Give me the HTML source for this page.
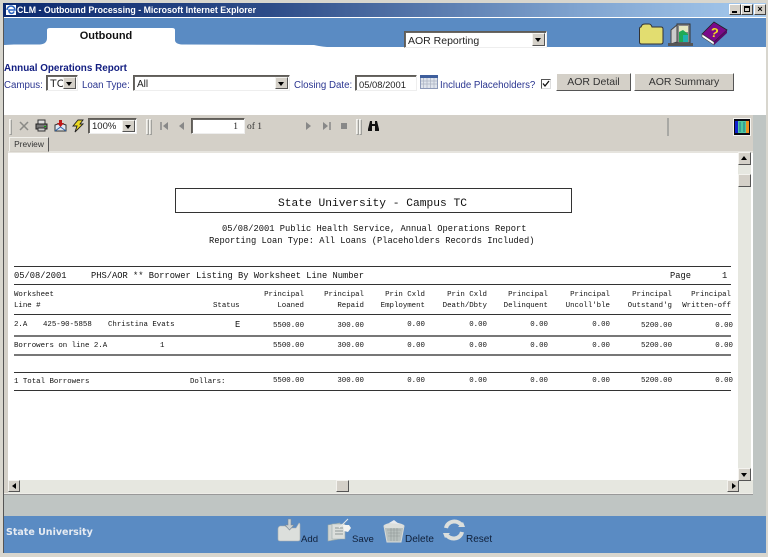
<!DOCTYPE html>
<html><head><meta charset="utf-8"><style>
html,body{margin:0;padding:0;background:#fff}
#p{position:relative;width:768px;height:557px;overflow:hidden;background:#fff;font-family:"Liberation Sans",sans-serif;filter:blur(.3px)}
#p div,#p span.a,#p svg{position:absolute}
.m{position:absolute;font-family:"Liberation Mono",monospace;color:#111;white-space:pre;line-height:10px;transform:translateY(1px)}
.s{font-size:7.4px}.n{font-size:8.75px}
.r{text-align:right}
.l{left:14px;width:717px;height:1px;background:#333}
.g{left:14px;width:717px;height:2px;background:#777}
.lb{position:absolute;font-size:9.7px;color:#2a3590;white-space:nowrap;line-height:12px}
.sel{background:#fff;border:1px solid;border-color:#5f5c57 #eee #eee #5f5c57;box-shadow:inset 1px 1px 0 #6a6864;box-sizing:border-box;font-size:10px;color:#222;line-height:17px;padding-left:3px;white-space:nowrap}
.arr{right:1px;top:1px;bottom:1px;width:13px;background:#d4d0c8;border:1px solid;border-color:#f4f3ef #555 #555 #f4f3ef;box-sizing:border-box}
.arr:after{content:"";position:absolute;left:2px;top:4px;border:3px solid transparent;border-top:4px solid #000;border-bottom:0}
.btn{background:#d4d0c8;border:1px solid;border-color:#fff #555 #555 #fff;box-sizing:border-box;font-size:10.5px;color:#333;text-align:center;line-height:17px}
.sb{background:#d4d0c8;border:1px solid;border-color:#f4f3ef #555 #555 #f4f3ef;box-sizing:border-box}
.grip{background:#dcdad4;border:1px solid;border-color:#f4f3ef #a0a09c #a0a09c #f4f3ef;box-sizing:border-box;width:3px}
.wb{top:4px;height:11px;width:12px;background:#d4d0c8;border:1px solid;border-color:#fff #444 #444 #fff;box-sizing:border-box}
.fl{position:absolute;font-size:9.6px;color:#10203a;line-height:12px}
</style></head><body><div id="p">

<!-- window frame -->
<div style="left:0;top:0;width:768px;height:557px;background:#d8d6ce"></div>
<div style="left:3px;top:3px;width:763px;height:14px;background:linear-gradient(90deg,#0d2a6f 0%,#2d4c88 35%,#7fa3cf 75%,#a6caee 100%)"></div>
<svg style="left:5px;top:4px" width="12" height="12" viewBox="0 0 12 12"><rect x="1" y="1" width="10" height="10" fill="#fff"/><path d="M2 6a4 4 0 1 1 8 0H4a2.500 2.500 0 0 0 5 1.500" fill="none" stroke="#2a62c0" stroke-width="1.600"/></svg>
<span class="a" style="left:17px;top:3px;font-size:8.8px;font-weight:bold;color:#fff;line-height:14px;white-space:nowrap">CLM - Outbound Processing - Microsoft Internet Explorer</span>
<div class="wb" style="left:729px"><div style="left:2px;bottom:1px;width:5px;height:2px;background:#000"></div></div>
<div class="wb" style="left:741px"><div style="left:2px;top:1px;width:6px;height:6px;border:1px solid #000;border-top-width:2px;box-sizing:border-box"></div></div>
<div class="wb" style="left:754px;color:#000;font:bold 9px/9px 'Liberation Sans';text-align:center">×</div>

<!-- content -->
<div style="left:3px;top:17px;width:763px;height:536px;background:#fff"></div>
<div style="left:3px;top:17px;width:1px;height:536px;background:#555"></div>
<div style="left:4px;top:18px;width:762px;height:29px;background:#5a8bc3"></div>
<svg style="left:4px;top:26px" width="762" height="22" viewBox="0 0 762 22"><path d="M0 22V19L10 18.500H36Q43 18 43 12V4Q43 2 46 2H168Q171 2 171 4V14Q171 18 178 18.500L310 19Q318 21 330 21.500H762V22Z" fill="#fff"/></svg>
<span class="a" style="left:47px;top:29px;width:118px;text-align:center;font-size:11px;font-weight:bold;color:#111;line-height:14px">Outbound</span>

<!-- top select -->
<div class="sel" style="left:404px;top:31px;width:143px;height:17px;font-size:10.500px;line-height:18px">AOR Reporting<div class="arr"></div></div>

<!-- top icons -->
<svg style="left:639px;top:22px" width="25" height="23" viewBox="0 0 25 23"><path d="M.5 7Q.5 5 2 5L3 3Q4 2 6 2h4q2 0 3 3h9q2 0 2 2v13q0 2-2 2H2.500Q.5 22 .5 20Z" fill="#e2dd70" stroke="#333"/></svg>
<svg style="left:668px;top:22px" width="25" height="25" viewBox="0 0 25 25"><rect x="9" y="2" width="13" height="19" fill="#8a8a8a" stroke="#333"/><rect x="11" y="4" width="9" height="6" fill="#e6e8c0"/><path d="M11 10l4-2 5 4v8h-9z" fill="#1faa55"/><path d="M15 13h5v7h-5z" fill="#1fb0b0"/><path d="M3 8l6-5v17l-6 2z" fill="#ccc" stroke="#444"/><rect x="0" y="21" width="25" height="3" fill="#555"/></svg>
<svg style="left:701px;top:21px" width="27" height="26" viewBox="0 0 27 26"><path d="M1 13L13 1l13 8-13 12z" fill="#7a0a8a" stroke="#222" stroke-width=".8"/><path d="M1 13l12 8v3L1 16z" fill="#fff" stroke="#444" stroke-width=".6"/><path d="M13 21l13-12v3L13 24z" fill="#5a0a6a"/><text x="9.500" y="16" font-family="Liberation Sans" font-weight="bold" font-size="13" fill="#f2e020" transform="rotate(8 13 12)">?</text></svg>

<!-- form row -->
<span class="a" style="left:4px;top:62px;font-size:9.900px;font-weight:bold;color:#101c80;line-height:13px;white-space:nowrap">Annual Operations Report</span>
<span class="lb" style="left:4px;top:80px">Campus:</span>
<div class="sel" style="left:46px;top:75px;width:32px;height:16px;font-size:11px">TC<div class="arr"></div></div>
<span class="lb" style="left:82px;top:80px">Loan Type:</span>
<div class="sel" style="left:133px;top:75px;width:157px;height:16px">All<div class="arr"></div></div>
<span class="lb" style="left:294px;top:80px">Closing Date:</span>
<div class="sel" style="left:355px;top:75px;width:62px;height:16px;font-size:9.400px">05/08/2001</div>
<svg style="left:420px;top:75px" width="18" height="14" viewBox="0 0 18 14"><rect x=".5" y=".5" width="17" height="13" fill="#dfe4ec" stroke="#8c99b8"/><rect x="0" y="0" width="18" height="3" fill="#3e5e9c"/><path d="M3.500 3v10M7 3v10M10.500 3v10M14 3v10M1 6h16M1 9h16" stroke="#aab2c2" stroke-width=".7"/></svg>
<span class="lb" style="left:440px;top:80px">Include Placeholders?</span>
<div style="left:541px;top:79px;width:10px;height:10px;background:#fff;border:1px solid;border-color:#555 #ddd #ddd #555;box-sizing:border-box"></div>
<svg style="left:542px;top:80px" width="8" height="8" viewBox="0 0 8 8"><path d="M1 3.500l2 2.500 4-5" fill="none" stroke="#111" stroke-width="1.300"/></svg>
<div class="btn" style="left:556px;top:73px;width:75px;height:18px">AOR Detail</div>
<div class="btn" style="left:634px;top:73px;width:100px;height:18px">AOR Summary</div>

<!-- toolbar -->
<div style="left:4px;top:115px;width:749px;height:37px;background:#d4d0c8"></div>
<div style="left:4px;top:115px;width:4px;height:380px;background:#d4d0c8"></div>
<div style="left:8px;top:151px;width:745px;height:2px;background:#e6e4de"></div>
<div class="grip" style="left:9px;top:119px;height:16px"></div>
<svg style="left:19px;top:121px" width="10" height="10" viewBox="0 0 10 10"><path d="M1 1l8 8M9 1l-8 8" stroke="#8a8a86" stroke-width="1.500"/></svg>
<svg style="left:35px;top:119px" width="13" height="13" viewBox="0 0 13 13"><path d="M3 1h7v4H3z" fill="#ddd" stroke="#333"/><path d="M1 5h11v5H1z" fill="#777" stroke="#222"/><path d="M3 9h7v3H3z" fill="#ccc" stroke="#333"/><rect x="9" y="7" width="2" height="1" fill="#0a0"/></svg>
<svg style="left:54px;top:119px" width="13" height="13" viewBox="0 0 13 13"><path d="M1 6l5.500-2L12 6v6H1z" fill="#dfe8f2" stroke="#333"/><path d="M1 12l5.500-4L12 12" fill="none" stroke="#36a"/><path d="M5 1h3v3h2L6.500 8 3 4h2z" fill="#c01818"/></svg>
<svg style="left:72px;top:119px" width="12" height="14" viewBox="0 0 12 14"><path d="M6 1h5L8 5h3L3 13l2-6H1z" fill="#ecd820" stroke="#222" stroke-width=".9"/></svg>
<div class="sel" style="left:88px;top:118px;width:49px;height:16px;font-size:9.500px;line-height:16px">100%<div class="arr"></div></div>
<div class="grip" style="left:146px;top:119px;height:16px"></div>
<div class="grip" style="left:149px;top:119px;height:16px"></div>
<svg style="left:160px;top:121px" width="9" height="10" viewBox="0 0 9 10"><path d="M1 1v8" stroke="#888" stroke-width="1.500"/><path d="M8 1v8L3 5z" fill="#888"/></svg>
<svg style="left:178px;top:121px" width="7" height="10" viewBox="0 0 7 10"><path d="M6 1v8L1 5z" fill="#888"/></svg>
<div class="sel" style="left:191px;top:118px;width:54px;height:16px;text-align:right;padding-right:6px;font:9.500px/16px 'Liberation Serif'">1</div>
<span class="a" style="left:247px;top:121px;font:9.500px/12px 'Liberation Serif';color:#333">of 1</span>
<svg style="left:305px;top:121px" width="7" height="10" viewBox="0 0 7 10"><path d="M1 1v8l5-4z" fill="#888"/></svg>
<svg style="left:322px;top:121px" width="9" height="10" viewBox="0 0 9 10"><path d="M1 1v8l5-4z" fill="#888"/><path d="M8 1v8" stroke="#888" stroke-width="1.500"/></svg>
<div style="left:341px;top:123px;width:6px;height:6px;background:#888"></div>
<div class="grip" style="left:356px;top:119px;height:16px"></div>
<div class="grip" style="left:359px;top:119px;height:16px"></div>
<svg style="left:367px;top:120px" width="13" height="11" viewBox="0 0 13 11"><path d="M1 9l2-8h2v3h3V1h2l2 8v2H8V6H5v5H1z" fill="#111"/></svg>
<div style="left:667px;top:118px;height:18px;width:2px;background:#a8a8a4"></div>
<div style="left:733px;top:118px;width:18px;height:18px;background:#f4f3ef"></div>
<svg style="left:734px;top:119px" width="16" height="16" viewBox="0 0 16 16"><rect width="16" height="16" fill="#0a0a14"/><rect x="1" y="2" width="4" height="12" fill="#1020d0"/><rect x="11" y="2" width="4" height="12" fill="#f09020"/><rect x="4" y="2" width="8" height="12" fill="#50c8a0"/><path d="M6 3v10M10 3v10" stroke="#278"/></svg>
<div style="left:9px;top:137px;width:40px;height:15px;background:#d9d6ce;border:1px solid;border-color:#f2f1ec #555 #d4d0c8 #f2f1ec;box-sizing:border-box;font-size:8.400px;color:#333;text-align:center;line-height:13px">Preview</div>

<!-- report -->
<div style="left:8px;top:153px;width:730px;height:327px;background:#fff"></div>
<div style="left:175px;top:188px;width:397px;height:25px;border:1px solid #333;box-sizing:border-box"></div>
<span class="m" style="left:278px;top:198px;font-size:11.250px">State University - Campus TC</span>
<span class="m n" style="left:222px;top:223px">05/08/2001 Public Health Service, Annual Operations Report</span>
<span class="m n" style="left:209px;top:235px">Reporting Loan Type: All Loans (Placeholders Records Included)</span>

<div class="l" style="top:266px"></div>
<span class="m n" style="left:14px;top:270px">05/08/2001</span>
<span class="m n" style="left:91px;top:270px">PHS/AOR ** Borrower Listing By Worksheet Line Number</span>
<span class="m n" style="left:670px;top:270px">Page</span>
<span class="m n" style="left:722px;top:270px">1</span>
<div class="l" style="top:284px"></div>

<span class="m s" style="left:14px;top:289px">Worksheet</span>
<span class="m s" style="left:14px;top:300px">Line #</span>
<span class="m s" style="left:213px;top:300px">Status</span>
<span class="m s r" style="right:464px;top:289px">Principal</span><span class="m s r" style="right:464px;top:300px">Loaned</span>
<span class="m s r" style="right:404px;top:289px">Principal</span><span class="m s r" style="right:404px;top:300px">Repaid</span>
<span class="m s r" style="right:343px;top:289px">Prin Cxld</span><span class="m s r" style="right:343px;top:300px">Employment</span>
<span class="m s r" style="right:281px;top:289px">Prin Cxld</span><span class="m s r" style="right:281px;top:300px">Death/Dbty</span>
<span class="m s r" style="right:220px;top:289px">Principal</span><span class="m s r" style="right:220px;top:300px">Delinquent</span>
<span class="m s r" style="right:158px;top:289px">Principal</span><span class="m s r" style="right:158px;top:300px">Uncoll'ble</span>
<span class="m s r" style="right:96px;top:289px">Principal</span><span class="m s r" style="right:96px;top:300px">Outstand'g</span>
<span class="m s r" style="right:37px;top:289px">Principal</span><span class="m s r" style="right:37px;top:300px">Written-off</span>
<div class="l" style="top:314px"></div>

<span class="m s" style="left:14px;top:319px">2.A</span>
<span class="m s" style="left:43px;top:319px">425-90-5858</span>
<span class="m s" style="left:108px;top:319px">Christina Evats</span>
<span class="m n" style="left:235px;top:319px">E</span>
<span class="m s r" style="right:464px;top:320px">5500.00</span><span class="m s r" style="right:404px;top:320px">300.00</span><span class="m s r" style="right:343px;top:319px">0.00</span><span class="m s r" style="right:281px;top:319px">0.00</span><span class="m s r" style="right:220px;top:319px">0.00</span><span class="m s r" style="right:158px;top:319px">0.00</span><span class="m s r" style="right:96px;top:320px">5200.00</span><span class="m s r" style="right:35px;top:320px">0.00</span>
<div class="g" style="top:335px"></div>

<span class="m s" style="left:14px;top:340px">Borrowers on line 2.A</span>
<span class="m s" style="left:160px;top:340px">1</span>
<span class="m s r" style="right:464px;top:340px">5500.00</span><span class="m s r" style="right:404px;top:340px">300.00</span><span class="m s r" style="right:343px;top:340px">0.00</span><span class="m s r" style="right:281px;top:340px">0.00</span><span class="m s r" style="right:220px;top:340px">0.00</span><span class="m s r" style="right:158px;top:340px">0.00</span><span class="m s r" style="right:96px;top:340px">5200.00</span><span class="m s r" style="right:35px;top:340px">0.00</span>
<div class="g" style="top:354px"></div>

<div class="l" style="top:372px"></div>
<span class="m s" style="left:14px;top:376px">1 Total Borrowers</span>
<span class="m s" style="left:190px;top:376px">Dollars:</span>
<span class="m s r" style="right:464px;top:375px">5500.00</span><span class="m s r" style="right:404px;top:375px">300.00</span><span class="m s r" style="right:343px;top:375px">0.00</span><span class="m s r" style="right:281px;top:375px">0.00</span><span class="m s r" style="right:220px;top:375px">0.00</span><span class="m s r" style="right:158px;top:375px">0.00</span><span class="m s r" style="right:96px;top:375px">5200.00</span><span class="m s r" style="right:35px;top:375px">0.00</span>
<div class="l" style="top:390px"></div>

<!-- scrollbars -->
<div style="left:738px;top:153px;width:13px;height:341px;background:#e6e7e0"></div>
<div style="left:8px;top:480px;width:745px;height:14px;background:#e6e7e0"></div>
<div class="sb" style="left:738px;top:152px;width:13px;height:13px"><div style="left:2px;top:3px;border:3px solid transparent;border-bottom:4px solid #000;border-top:0"></div></div>
<div class="sb" style="left:738px;top:174px;width:13px;height:13px"></div>
<div class="sb" style="left:738px;top:468px;width:13px;height:13px"><div style="left:2px;top:4px;border:3px solid transparent;border-top:4px solid #000;border-bottom:0"></div></div>
<div class="sb" style="left:8px;top:480px;width:12px;height:12px"><div style="left:3px;top:2px;border:3px solid transparent;border-right:4px solid #000;border-left:0"></div></div>
<div class="sb" style="left:336px;top:480px;width:13px;height:12px"></div>
<div class="sb" style="left:727px;top:480px;width:12px;height:12px"><div style="left:4px;top:2px;border:3px solid transparent;border-left:4px solid #000;border-right:0"></div></div>
<div style="left:4px;top:493px;width:749px;height:2px;background:#eeede8"></div>

<!-- right gray column & lower gray -->
<div style="left:753px;top:115px;width:13px;height:401px;background:#bfc5c3"></div>
<div style="left:4px;top:495px;width:762px;height:21px;background:#bfc5c3"></div>
<div style="left:4px;top:494px;width:749px;height:1px;background:#999"></div>

<!-- footer -->
<div style="left:4px;top:516px;width:762px;height:37px;background:#5a8bc3"></div>
<span class="a" style="left:6px;top:526px;font-family:'DejaVu Sans',sans-serif;font-size:9.500px;font-weight:bold;color:#e6ebf2;line-height:13px;white-space:nowrap">State University</span>

<svg style="left:277px;top:518px" width="25" height="25" viewBox="0 0 25 25"><path d="M1 11q0-2 2-3h5l3 2h8l3-5q1 0 1 2v14q0 2-2 2H3q-2 0-2-2z" fill="#dcdfdc" stroke="#a8aeb0" stroke-width=".6"/><path d="M11 1h3v6h3l-4.500 5L8 7h3z" fill="#cdd2d2" stroke="#7d8a96" stroke-width=".6"/></svg>
<span class="fl" style="left:301px;top:534px">Add</span>
<svg style="left:327px;top:518px" width="25" height="25" viewBox="0 0 25 25"><path d="M1 7l12-2v16l-12 2z" fill="#d0d4d2" stroke="#9aa" stroke-width=".6"/><path d="M5 6h13v15H5z" fill="#dcdfdc" stroke="#9aa" stroke-width=".6"/><path d="M8 10h8M8 13h8M8 16h8" stroke="#8e9796"/><path d="M12 10l9-9" stroke="#e8eaea"/><path d="M16 7h6l2 3-3 4-4-1z" fill="#f4f4f2"/></svg>
<span class="fl" style="left:352px;top:534px">Save</span>
<svg style="left:383px;top:519px" width="22" height="24" viewBox="0 0 22 24"><path d="M1 7h20l-3 16H4z" fill="#b8c0be" stroke="#d8dbd8"/><path d="M1 6q10-5 20 0l-1 3H2z" fill="#dcdfdc"/><path d="M6 4l5-3 5 4z" fill="#e8eaee"/><path d="M4 11h14M5 14h12M5 17h12M8 9v13M11 9v13M14 9v13" stroke="#8e9796" stroke-width=".6"/></svg>
<span class="fl" style="left:405px;top:534px;font-size:10px">Delete</span>
<svg style="left:442px;top:519px" width="24" height="22" viewBox="0 0 24 22"><path d="M4 9a8.500 8 0 0 1 16-2" fill="none" stroke="#dcdfdc" stroke-width="4"/><path d="M20 13a8.500 8 0 0 1-16 2" fill="none" stroke="#dcdfdc" stroke-width="4"/><path d="M16 8h7l-2-5zM8 14H1l2 5z" fill="#dcdfdc"/></svg>
<span class="fl" style="left:466px;top:534px;font-size:10px">Reset</span>
</div></body></html>
